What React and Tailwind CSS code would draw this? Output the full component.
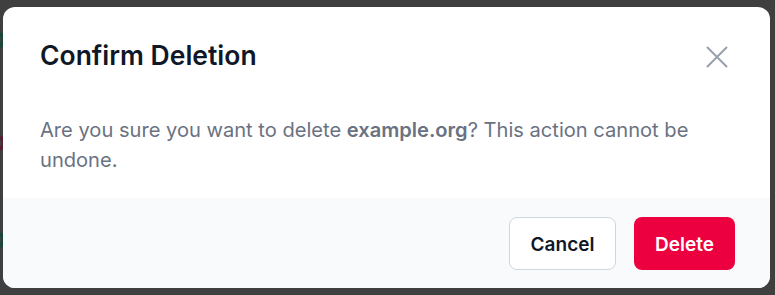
export default function App() {
  return (
    <div
      className="relative h-[295px] w-full overflow-hidden bg-[#3f3f3f] pl-[3px] pt-[7px]"
      style={{ fontFamily: "Inter, 'Noto Sans', sans-serif" }}
    >
      {/* page content peeking from behind the overlay */}
      <span className="absolute left-[-11px] top-[32px] h-[16px] w-[16px] rounded-full border-[3px] border-[#0d4a3a]" />
      <span className="absolute left-[-11px] top-[135px] h-[16px] w-[16px] rounded-full border-[3px] border-[#5a1c2c]" />
      <span className="absolute left-[-11px] top-[232px] h-[16px] w-[16px] rounded-full border-[3px] border-[#0d4a3a]" />

      <div className="relative flex h-[281px] w-[767px] flex-col overflow-hidden rounded-xl bg-white">
        <div className="flex items-start justify-between px-[37px] pt-[32px]">
          <h2 className="text-[26.5px] font-semibold leading-[32px] text-gray-900">Confirm Deletion</h2>
          <button className="mr-[5px] mt-[7px] text-gray-400">
            <svg width="22" height="22" viewBox="0 0 22 22" fill="none" stroke="currentColor" strokeWidth="2" strokeLinecap="round">
              <path d="M1.5 1.5 20.5 20.5M20.5 1.5 1.5 20.5" />
            </svg>
          </button>
        </div>

        <p className="px-[37px] pt-[44px] text-[20.1px] leading-[30px] text-gray-500">
          Are you sure you want to delete <span className="font-semibold">example.org</span>? This action cannot be
          undone.
        </p>

        <div className="mt-auto flex h-[90px] items-center justify-end gap-[18px] bg-gray-50 pr-[35px]">
          <button className="flex h-[53px] w-[107px] items-center justify-center rounded-lg border border-gray-300 bg-white pt-[5px] text-[19px] font-semibold text-gray-900">
            Cancel
          </button>
          <button className="flex h-[53px] w-[101px] items-center justify-center rounded-lg bg-rose-600 pt-[5px] text-[19px] font-semibold text-white">
            Delete
          </button>
        </div>
      </div>
    </div>
  );
}
